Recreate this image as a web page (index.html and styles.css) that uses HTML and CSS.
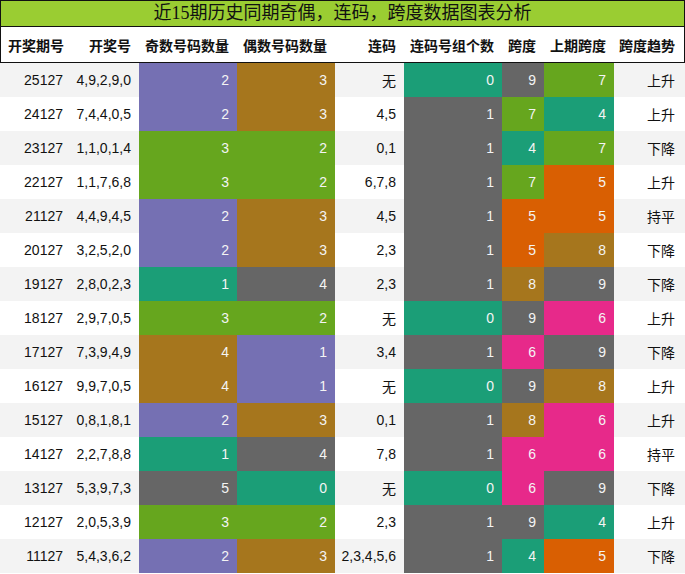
FILE: index.html
```html
<!DOCTYPE html>
<html lang="zh">
<head>
<meta charset="utf-8">
<title>近15期历史同期奇偶</title>
<link rel="stylesheet" href="styles.css">
</head>
<body>
<div class="title">近15期历史同期奇偶，连码，跨度数据图表分析</div>
<table class="grid">
<colgroup>
<col class="w70"><col class="w69"><col class="w98"><col class="w98"><col class="w69"><col class="w98"><col class="w42"><col class="w70"><col class="w71">
</colgroup>
<thead>
<tr><th class="first">开奖期号</th><th>开奖号</th><th>奇数号码数量</th><th>偶数号码数量</th><th>连码</th><th>连码号组个数</th><th>跨度</th><th>上期跨度</th><th class="last">跨度趋势</th></tr>
</thead>
<tbody>
<tr><td>25127</td><td>4,9,2,9,0</td><td class="p">2</td><td class="b">3</td><td>无</td><td class="t">0</td><td class="k">9</td><td class="g">7</td><td>上升</td></tr>
<tr><td>24127</td><td>7,4,4,0,5</td><td class="p">2</td><td class="b">3</td><td>4,5</td><td class="k">1</td><td class="g">7</td><td class="t">4</td><td>上升</td></tr>
<tr><td>23127</td><td>1,1,0,1,4</td><td class="g">3</td><td class="g">2</td><td>0,1</td><td class="k">1</td><td class="t">4</td><td class="g">7</td><td>下降</td></tr>
<tr><td>22127</td><td>1,1,7,6,8</td><td class="g">3</td><td class="g">2</td><td>6,7,8</td><td class="k">1</td><td class="g">7</td><td class="o">5</td><td>上升</td></tr>
<tr><td>21127</td><td>4,4,9,4,5</td><td class="p">2</td><td class="b">3</td><td>4,5</td><td class="k">1</td><td class="o">5</td><td class="o">5</td><td>持平</td></tr>
<tr><td>20127</td><td>3,2,5,2,0</td><td class="p">2</td><td class="b">3</td><td>2,3</td><td class="k">1</td><td class="o">5</td><td class="b">8</td><td>下降</td></tr>
<tr><td>19127</td><td>2,8,0,2,3</td><td class="t">1</td><td class="k">4</td><td>2,3</td><td class="k">1</td><td class="b">8</td><td class="k">9</td><td>下降</td></tr>
<tr><td>18127</td><td>2,9,7,0,5</td><td class="g">3</td><td class="g">2</td><td>无</td><td class="t">0</td><td class="k">9</td><td class="m">6</td><td>上升</td></tr>
<tr><td>17127</td><td>7,3,9,4,9</td><td class="b">4</td><td class="p">1</td><td>3,4</td><td class="k">1</td><td class="m">6</td><td class="k">9</td><td>下降</td></tr>
<tr><td>16127</td><td>9,9,7,0,5</td><td class="b">4</td><td class="p">1</td><td>无</td><td class="t">0</td><td class="k">9</td><td class="b">8</td><td>上升</td></tr>
<tr><td>15127</td><td>0,8,1,8,1</td><td class="p">2</td><td class="b">3</td><td>0,1</td><td class="k">1</td><td class="b">8</td><td class="m">6</td><td>上升</td></tr>
<tr><td>14127</td><td>2,2,7,8,8</td><td class="t">1</td><td class="k">4</td><td>7,8</td><td class="k">1</td><td class="m">6</td><td class="m">6</td><td>持平</td></tr>
<tr><td>13127</td><td>5,3,9,7,3</td><td class="k">5</td><td class="t">0</td><td>无</td><td class="t">0</td><td class="m">6</td><td class="k">9</td><td>下降</td></tr>
<tr><td>12127</td><td>2,0,5,3,9</td><td class="g">3</td><td class="g">2</td><td>2,3</td><td class="k">1</td><td class="k">9</td><td class="t">4</td><td>上升</td></tr>
<tr><td>11127</td><td>5,4,3,6,2</td><td class="p">2</td><td class="b">3</td><td>2,3,4,5,6</td><td class="k">1</td><td class="t">4</td><td class="o">5</td><td>下降</td></tr>
</tbody>
</table>
</body>
</html>
```
FILE: styles.css
```css
html, body {
  margin: 0;
  padding: 0;
  background: #fff;
}
body {
  width: 685px;
  font-family: "Liberation Sans", "Noto Sans CJK SC", sans-serif;
  color: #111;
}
.title {
  box-sizing: border-box;
  height: 27px;
  border: 1px solid #111;
  background: #9acd32;
  font-family: "Liberation Serif", "Noto Sans CJK SC", serif;
  font-size: 18px;
  line-height: 25px;
  text-align: center;
  color: #111;
}
.grid {
  width: 685px;
  table-layout: fixed;
  border-collapse: separate;
  border-spacing: 0;
  font-size: 14px;
}
.w70 { width: 70px; }
.w69 { width: 69px; }
.w98 { width: 98px; }
.w42 { width: 42px; }
.w71 { width: 71px; }
.grid th {
  box-sizing: border-box;
  height: 36px;
  padding: 0 8px 0 0;
  text-align: right;
  font-weight: bold;
  white-space: nowrap;
  border-bottom: 1px solid #111;
  background: #fff;
  color: #111;
}
.grid th.first {
  border-left: 1px solid #111;
  text-align: left;
  padding: 0 0 0 7px;
}
.grid th.last {
  border-right: 1px solid #111;
  padding-right: 9px;
}
.grid td {
  height: 34px;
  padding: 0 8px 0 0;
  text-align: right;
  white-space: nowrap;
  color: #111;
}
.grid .row-odd, .grid tbody tr:nth-child(odd) { background: #f3f3f3; }
.grid tbody tr:nth-child(even) { background: #fff; }
.grid td:first-child { padding-right: 7px; }
.grid td:last-child { padding-right: 10px; }
.grid td.p { background: #7570b3; color: #f4f4f4; }
.grid td.b { background: #a6761d; color: #f4f4f4; }
.grid td.g { background: #66a61e; color: #f4f4f4; }
.grid td.t { background: #1b9e77; color: #f4f4f4; }
.grid td.k { background: #666666; color: #f4f4f4; }
.grid td.o { background: #d95f02; color: #f4f4f4; }
.grid td.m { background: #e7298a; color: #f4f4f4; }
```
